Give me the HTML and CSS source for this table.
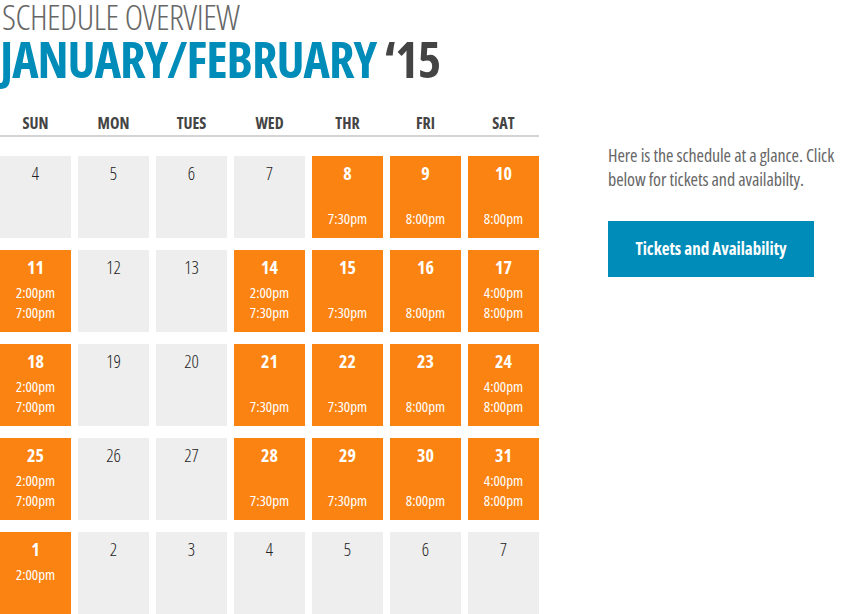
FILE: index.html
```html
<!DOCTYPE html>
<html lang="en">
<head>
  <meta charset="UTF-8" />
  <title>Schedule Overview</title>
  <link rel="stylesheet" href="styles.css">
</head>
<body>

<div class="page">
  <div class="schedule">
    <h2 class="kicker">SCHEDULE OVERVIEW</h2>
    <h1 class="title">JANUARY/FEBRUARY <span class="year">&lsquo;15</span></h1>

    <div class="days">
      <div>SUN</div><div>MON</div><div>TUES</div><div>WED</div><div>THR</div><div>FRI</div><div>SAT</div>
    </div>

    <div class="calendar">
      <div class="day"><b>4</b></div>
      <div class="day"><b>5</b></div>
      <div class="day"><b>6</b></div>
      <div class="day"><b>7</b></div>
      <div class="day show"><b>8</b><span>&nbsp;</span><span>7:30pm</span></div>
      <div class="day show"><b>9</b><span>&nbsp;</span><span>8:00pm</span></div>
      <div class="day show"><b>10</b><span>&nbsp;</span><span>8:00pm</span></div>

      <div class="day show"><b>11</b><span>2:00pm</span><span>7:00pm</span></div>
      <div class="day"><b>12</b></div>
      <div class="day"><b>13</b></div>
      <div class="day show"><b>14</b><span>2:00pm</span><span>7:30pm</span></div>
      <div class="day show"><b>15</b><span>&nbsp;</span><span>7:30pm</span></div>
      <div class="day show"><b>16</b><span>&nbsp;</span><span>8:00pm</span></div>
      <div class="day show"><b>17</b><span>4:00pm</span><span>8:00pm</span></div>

      <div class="day show"><b>18</b><span>2:00pm</span><span>7:00pm</span></div>
      <div class="day"><b>19</b></div>
      <div class="day"><b>20</b></div>
      <div class="day show"><b>21</b><span>&nbsp;</span><span>7:30pm</span></div>
      <div class="day show"><b>22</b><span>&nbsp;</span><span>7:30pm</span></div>
      <div class="day show"><b>23</b><span>&nbsp;</span><span>8:00pm</span></div>
      <div class="day show"><b>24</b><span>4:00pm</span><span>8:00pm</span></div>

      <div class="day show"><b>25</b><span>2:00pm</span><span>7:00pm</span></div>
      <div class="day"><b>26</b></div>
      <div class="day"><b>27</b></div>
      <div class="day show"><b>28</b><span>&nbsp;</span><span>7:30pm</span></div>
      <div class="day show"><b>29</b><span>&nbsp;</span><span>7:30pm</span></div>
      <div class="day show"><b>30</b><span>&nbsp;</span><span>8:00pm</span></div>
      <div class="day show"><b>31</b><span>4:00pm</span><span>8:00pm</span></div>

      <div class="day show"><b>1</b><span>2:00pm</span></div>
      <div class="day"><b>2</b></div>
      <div class="day"><b>3</b></div>
      <div class="day"><b>4</b></div>
      <div class="day"><b>5</b></div>
      <div class="day"><b>6</b></div>
      <div class="day"><b>7</b></div>
    </div>
  </div>

  <aside class="side">
    <p>Here is the schedule at a glance. Click below for tickets and availabilty.</p>
    <a class="tickets" href="#">Tickets and Availability</a>
  </aside>
</div>

</body>
</html>
```

FILE: styles.css
```css
body {
  margin: 0;
  font-family: 'Open Sans', 'Liberation Sans Narrow', sans-serif;
  font-stretch: condensed;
  background: #fff;
  color: #333;
}

.page {
  display: flex;
}

.schedule {
  width: 539px;
}

.kicker {
  margin: 0;
  padding-left: 2px;
  font-size: 35px;
  font-weight: 300;
  line-height: 34px;
  color: #666;
  letter-spacing: -0.5px;
}

.title {
  margin: 0;
  font-size: 50px;
  font-weight: 700;
  line-height: 50px;
  color: #008cb8;
  letter-spacing: -1px;
}

.title .year {
  color: #444;
}

.days {
  display: grid;
  grid-template-columns: repeat(7, 71px);
  column-gap: 7px;
  margin-top: 27px;
  border-bottom: 2px solid #d4d4d4;
}

.days div {
  text-align: center;
  font-size: 16px;
  font-weight: 700;
  line-height: 24px;
  color: #444;
}

.calendar {
  display: grid;
  grid-template-columns: repeat(7, 71px);
  grid-auto-rows: 82px;
  gap: 12px 7px;
  margin-top: 19px;
}

.day {
  display: flex;
  flex-direction: column;
  align-items: center;
  padding-top: 6px;
  background: #eeeeee;
  color: #222;
}

.day b {
  font-size: 18px;
  font-weight: 300;
  line-height: 22px;
  margin-bottom: 4px;
}

.day span {
  font-size: 15px;
  line-height: 20px;
  color: #fff;
}

.day.show {
  background: #fa8312;
  color: #fff;
}

.day.show b {
  font-weight: 700;
}

.side {
  margin-left: 69px;
  padding-top: 143px;
  width: 234px;
}

.side p {
  margin: 0;
  font-size: 18px;
  line-height: 24px;
  color: #666;
  letter-spacing: -0.1px;
}

.tickets {
  display: block;
  width: 206px;
  height: 56px;
  margin-top: 30px;
  background: #008cb8;
  color: #fff;
  font-size: 17px;
  font-weight: 700;
  line-height: 56px;
  text-align: center;
  text-decoration: none;
}
```
